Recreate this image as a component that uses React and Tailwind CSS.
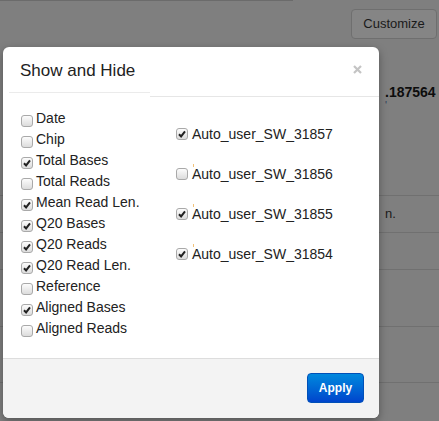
import React from 'react';

const leftItems = [
    { label: 'Date', checked: false },
    { label: 'Chip', checked: false },
    { label: 'Total Bases', checked: true },
    { label: 'Total Reads', checked: false },
    { label: 'Mean Read Len.', checked: true },
    { label: 'Q20 Bases', checked: true },
    { label: 'Q20 Reads', checked: true },
    { label: 'Q20 Read Len.', checked: true },
    { label: 'Reference', checked: false },
    { label: 'Aligned Bases', checked: true },
    { label: 'Aligned Reads', checked: false },
];

const rightItems = [
    { label: 'Auto_user_SW_31857', checked: true, dot: false },
    { label: 'Auto_user_SW_31856', checked: false, dot: true },
    { label: 'Auto_user_SW_31855', checked: true, dot: true },
    { label: 'Auto_user_SW_31854', checked: true, dot: true },
];

const Box = ({ checked, className = '' }) => (
    <span className={`flex h-[12px] w-[12px] shrink-0 items-center justify-center rounded-[3px] border border-[#a9a9a9] bg-gradient-to-b from-[#fcfcfc] to-[#dcdcdc] ${className}`}>
        {checked && (
            <svg width="8" height="8" viewBox="0 0 8 8">
                <path d="M1 4.2 L3.1 6.4 L7 1.4" fill="none" stroke="#222" strokeWidth="2" />
            </svg>
        )}
    </span>
);

const App = () => {
    return (
        <div className="relative h-[421px] w-[439px] overflow-hidden bg-[#7f7f7f] font-['Liberation_Sans',Arial,sans-serif]">
            {/* page behind the overlay */}
            <div className="h-px w-[293px] bg-[#6b6b6b]" />
            <div className="flex justify-end pr-[2px] pt-[8px]">
                <div className="flex h-[30px] w-[86px] items-center justify-center rounded-[4px] border border-[#6f6f6f] bg-[#858585] text-[13px] text-[#1a1a1a]">
                    Customize
                </div>
            </div>
            <div className="pl-[385px] pt-[45px] text-[14px] font-bold leading-[16px] text-[#0d0d0d]">.187564</div>
            <div className="pl-[385px] text-[10px] leading-[12px] text-[#2a3a5a]">'</div>
            <div className="mt-[83px] border-t border-[#707070]" />
            <div className="pl-[385px] pt-[10px] text-[13px] leading-[16px] text-[#1a1a1a]">n.</div>
            <div className="mt-[10px] border-t border-[#707070]" />
            <div className="mt-[36px] border-t border-[#707070]" />
            <div className="mt-[56px] border-t border-[#707070]" />
            <div className="mt-[55px] border-t border-[#707070]" />

            {/* modal */}
            <div className="absolute left-[3px] top-[47px] flex h-[371px] w-[376px] flex-col overflow-hidden rounded-[6px] bg-white shadow-[0_3px_8px_rgba(0,0,0,0.35)]">
                <div className="flex h-[45px] items-start justify-between pl-[17px] pr-[17px] pt-[12px]">
                    <span className="text-[17px] leading-[24px] text-[#222]">Show and Hide</span>
                    <svg className="mt-[6px]" width="9" height="9" viewBox="0 0 9 9">
                        <path d="M1 1 L8 8 M8 1 L1 8" stroke="#c4c4c4" strokeWidth="2.2" />
                    </svg>
                </div>
                <div className="flex h-[5px]">
                    <div className="ml-[6px] w-[141px] border-t border-[#ebebeb]" />
                    <div className="flex-1 border-b border-[#e6e6e6]" />
                </div>

                <div className="flex flex-1 pl-[18px] pt-[11px] text-[14px] leading-[21px] text-[#222]">
                    <div className="w-[155px]">
                        {leftItems.map((item) => (
                            <div key={item.label} className="flex h-[21px] items-start gap-[3px]">
                                <Box checked={item.checked} className="mt-[7px]" />
                                <span>{item.label}</span>
                            </div>
                        ))}
                    </div>
                    <div className="pt-[16px]">
                        {rightItems.map((item) => (
                            <div key={item.label} className="h-[40px]">
                                {item.dot && <div className="ml-[17px] h-[3px] w-px bg-[#f2c27a]" />}
                                <div className={`flex items-start gap-[4px] ${item.dot ? 'mt-[-3px]' : ''}`}>
                                    <Box checked={item.checked} className="mt-[4px]" />
                                    <span>{item.label}</span>
                                </div>
                            </div>
                        ))}
                    </div>
                </div>

                <div className="flex h-[60px] justify-end border-t border-[#dddddd] bg-[#f3f3f3] pr-[15px] pt-[14px]">
                    <div className="flex h-[30px] w-[57px] items-center justify-center rounded-[4px] border border-[#0050b8] bg-gradient-to-b from-[#0088dd] to-[#0044cc] text-[12px] font-bold text-white">
                        Apply
                    </div>
                </div>
            </div>
        </div>
    );
};

export default App;
